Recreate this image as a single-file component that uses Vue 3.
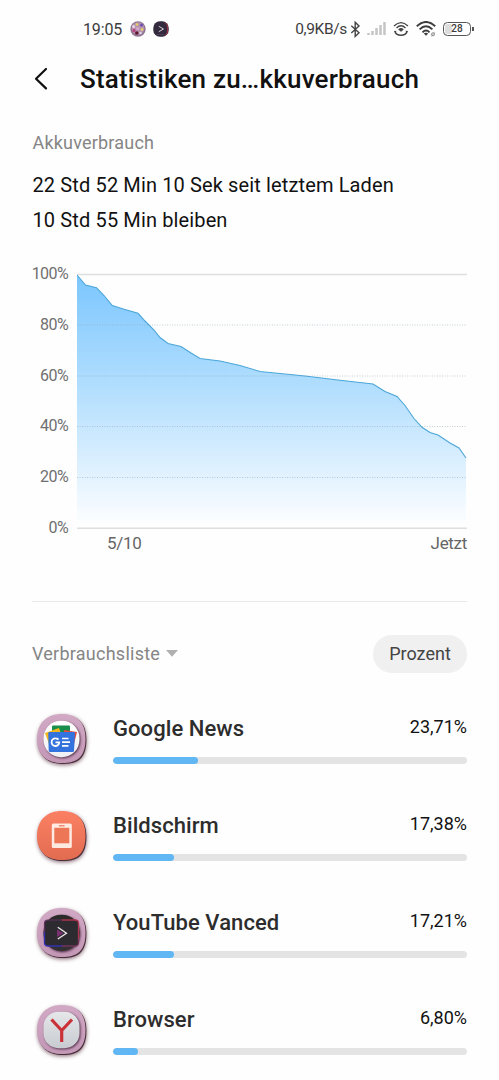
<template>
  <div class="screen">
    <div class="status-bar">
      <span class="clock">19:05</span>
      <svg class="note-icon" viewBox="0 0 16 16">
        <circle cx="8" cy="8" r="7.7" fill="#8f7590" />
        <circle cx="8" cy="7.5" r="6.3" fill="#b492b0" />
        <circle cx="7" cy="3.5" r="1.3" fill="#e8d05c" />
        <circle cx="11.5" cy="4.2" r="1.4" fill="#684bb0" />
        <circle cx="3.6" cy="5.5" r="1.5" fill="#ead6df" />
        <circle cx="12" cy="8.5" r="1.3" fill="#efd65d" />
        <circle cx="4" cy="9.4" r="1.5" fill="#b83c79" />
        <circle cx="6.8" cy="12" r="1.8" fill="#60172e" />
        <circle cx="10.5" cy="12" r="1.3" fill="#dad0e8" />
        <circle cx="7.7" cy="7.5" r="1.5" fill="#d8a8ce" />
      </svg>
      <svg class="note-icon second" viewBox="0 0 16 16">
        <rect x=".3" y=".3" width="15.4" height="15.4" rx="6.5" fill="#332b3d" />
        <path d="M12 1.5Q14.8 3 14.8 8T12 14.5" fill="none" stroke="#a52f49" stroke-width="1" />
        <path d="M5.8 5.3L10.5 8L5.8 10.7" fill="none" stroke="#d5cbd2" stroke-width="1" />
        <path d="M4 13.5h7" stroke="#59486a" stroke-width=".7" />
      </svg>
      <div class="system">
        <span class="speed">0,9KB/s</span>
        <svg class="bluetooth" width="11" height="17" viewBox="0 0 11 17">
          <path d="M1.3 4.7L9 11.7L5.2 15.4V1.2L9 5L1.3 12" fill="none" stroke="#444" stroke-width="1.4" />
        </svg>
        <svg class="signal" width="19" height="14" viewBox="0 0 19 14">
          <path d="M1.5 11v2M5.5 9v4M9.5 6v7M13.5 3v10M17.5 0v13" stroke="#c5c5c5" stroke-width="2.5" />
        </svg>
        <svg class="hotspot" width="16" height="16" viewBox="0 0 16 16">
          <g fill="none" stroke="#444" stroke-width="1.3">
            <path d="M1 5Q8-1.8 15 5M3.5 7Q8 2.5 12.5 7M5.7 9Q8 6.5 10.3 9" />
            <path d="M2 10.5Q3.2 14.3 8 14.3T14 10.5" stroke-width="1.5" />
          </g>
          <path d="M.8 10l2.7-.3-1 2.2zM15.2 10l-2.7-.3 1 2.2z" fill="#444" />
          <circle cx="8" cy="9.2" r="1.3" fill="#444" />
        </svg>
        <svg class="wifi" width="20" height="17" viewBox="0 0 20 17">
          <path d="M.8 5.2Q10-3.3 19.2 5.2M3.6 8.4Q10 2.3 16.4 8.4M6.5 11.3Q10 7.8 13.5 11.3" fill="none" stroke="#3d3d3d" stroke-width="1.9" />
          <path d="M7.8 12.5Q10 10.8 12.2 12.5L10 14.8z" fill="#3d3d3d" />
          <circle cx="17" cy="13.3" r="1.5" fill="none" stroke="#888" />
          <path d="M15.2 15.2l3.8-3.8" stroke="#888" stroke-width=".7" />
        </svg>
        <div class="battery">
          <span class="charge"></span>
          <span class="level">28</span>
        </div>
      </div>
    </div>

    <header class="title-bar">
      <svg width="14" height="24" viewBox="0 0 14 24">
        <path d="M12 2L2 11.7L12 21.4" fill="none" stroke="#111" stroke-width="2.2" stroke-linecap="round" stroke-linejoin="round" />
      </svg>
      <h1>Statistiken zu…kkuverbrauch</h1>
    </header>

    <section class="summary">
      <div class="caption">Akkuverbrauch</div>
      <p class="since">22 Std 52 Min 10 Sek seit letztem Laden</p>
      <p class="left">10 Std 55 Min bleiben</p>
    </section>

    <section class="chart">
      <div class="y-axis">
        <span v-for="tick in ticks" :key="tick">{{ tick }}%</span>
      </div>
      <div class="plot">
        <svg width="390" height="256" viewBox="0 0 390 256">
          <defs>
            <linearGradient id="fill" x1="0" y1="0" x2="0" y2="1">
              <stop offset="0" stop-color="#7bc6fe" />
              <stop offset=".5" stop-color="#b9e1fe" />
              <stop offset="1" stop-color="#fff" />
            </linearGradient>
          </defs>
          <path d="M0 1.5H390" stroke="#dedede" stroke-width="1.4" />
          <polygon :points="`0,255 ${curve} 389,255`" fill="url(#fill)" />
          <path d="M0 52H390M0 103H390M0 153.5H390M0 204.5H390" stroke="#879fac" stroke-opacity=".5" stroke-dasharray="1 1.5" />
          <polyline :points="curve" fill="none" stroke="#4ba6d8" stroke-width="1.1" />
          <path d="M0 255.3H390" stroke="#dedede" stroke-width="1.4" />
        </svg>
        <div class="x-axis"><span>5/10</span><span>Jetzt</span></div>
      </div>
    </section>

    <div class="filter">
      <span>Verbrauchsliste</span>
      <svg width="12" height="7" viewBox="0 0 12 7"><path d="M0 0h12L6 6.8z" fill="#b0b0b0" /></svg>
      <button>Prozent</button>
    </div>

    <ul class="usage">
      <li v-for="app in apps" :key="app.id">
        <svg class="app-icon" width="60" height="60" viewBox="0 0 60 60">
          <defs>
            <linearGradient :id="'rim-' + app.id" x1="0" y1="0" x2="0" y2="1">
              <stop offset="0" :stop-color="app.rim[0]" />
              <stop offset="1" :stop-color="app.rim[1]" />
            </linearGradient>
            <linearGradient :id="'face-' + app.id" x1="0" y1="0" x2="0" y2="1">
              <stop offset="0" :stop-color="app.face[0]" />
              <stop offset="1" :stop-color="app.face[1]" />
            </linearGradient>
          </defs>
          <path class="rim-shadow" :d="blob" fill="#492e39" />
          <path :d="blob" :fill="`url(#rim-${app.id})`" />
          <g v-if="app.id !== 'screen'">
            <rect class="face" x="11.5" y="10.7" width="36" height="36.5" :rx="app.id === 'browser' ? 15 : 17.5" :fill="`url(#face-${app.id})`" />
          </g>
          <g v-if="app.id === 'news'">
            <rect x="20" y="15.5" width="18" height="12" rx="1" fill="#188f4c" />
            <path d="M13 23L27 18L31 29L17 34z" fill="#f5b51e" />
            <path d="M32 20L45 22L42 34L31 31z" fill="#e64a3b" />
            <path d="M16.2 23Q16.7 21.8 18 22H41.5Q43 22 43 23.3L42 41Q42 42 40.5 42H18Q16.8 42 16.7 40.5z" fill="#3273dd" />
            <path d="M26.5 29.6Q25.4 28.4 23.5 28.4A3.8 3.8 0 1 0 27.2 32.4H23.5" fill="none" stroke="#fff" stroke-width="1.8" />
            <path d="M30 28.5h6.5M30 32.2h8M30 35.8h6.5" stroke="#fff" stroke-width="1.7" />
          </g>
          <g v-else-if="app.id === 'screen'">
            <rect x="19.8" y="16.5" width="20" height="24.5" rx="1.5" fill="#ffeae2" />
            <rect x="22.3" y="20.8" width="15" height="15.5" fill="#ed7657" />
            <path d="M27 18.8h5.5" stroke="#ed7657" stroke-width="1.2" />
          </g>
          <g v-else-if="app.id === 'vanced'" fill="none">
            <rect x="12.5" y="16" width="34" height="26" rx="4" fill="#2d2b30" />
            <path d="M12.5 29V19.5Q12.5 16 16 16H31" stroke="#60305e" stroke-width="1.2" />
            <path d="M30 16H43Q46.5 16 46.5 19.5V36" stroke="#ac334c" stroke-width="1.3" />
            <path d="M12.5 28V38.5Q12.5 42 16 42H31" stroke="#3531ad" stroke-width="1.4" />
            <path d="M30 42H43Q46.5 42 46.5 38.5V35" stroke="#71345c" stroke-width="1.3" />
            <path d="M25 25.6L31.5 29.3L25 33z" fill="#793171" />
            <path d="M25.8 23.3L34.5 29.2L25.8 35" stroke="#f1e7eb" stroke-width="1.3" />
          </g>
          <path v-else d="M19.5 18.5L29.7 29.5L40 18.5M29.7 29V41" fill="none" stroke="#cb3238" stroke-width="3.2" />
        </svg>
        <div class="details">
          <div class="row"><span class="name">{{ app.name }}</span><span class="percent">{{ app.percent }}</span></div>
          <div class="track"><div class="bar" :style="{ width: app.width + 'px' }"></div></div>
        </div>
      </li>
    </ul>
  </div>
</template>

<script setup>
const ticks = [100, 80, 60, 40, 20, 0]
const curve = '0,2 8.5,12 19.5,14.7 27,22.5 35.3,32.5 48,36.5 61,40.3 68,48 77,57 83,64.5 91,70.5 104,73.5 114,80 123,85.5 143,88 163,92.5 183,98.5 228,103 263,107.3 296,111 308,118.5 320,123.5 328,132.5 337,145.5 345,154.3 353,159.5 361,162 373,170 382,175 389,185'
const blob = 'M29.5 4C43 4 53.5 10 53.5 29S44 53 30 53S5 46 5 29S16 4 29.5 4z'
const pink = ['#d1a9c5', '#c397b6']

const apps = [
  { id: 'news', name: 'Google News', percent: '23,71%', width: 85, rim: pink, face: ['#ffffff', '#eff0f3'] },
  { id: 'screen', name: 'Bildschirm', percent: '17,38%', width: 60.5, rim: ['#fb8063', '#e26c50'], face: ['#ed7657', '#ed7657'] },
  { id: 'vanced', name: 'YouTube Vanced', percent: '17,21%', width: 60.5, rim: pink, face: ['#2c2929', '#343234'] },
  { id: 'browser', name: 'Browser', percent: '6,80%', width: 25, rim: pink, face: ['#e5e7e9', '#c8cbd0'] }
]
</script>

<style>
body {
  background: #fefefe;
}
</style>

<style scoped>
.screen {
  width: 499px;
  height: 1080px;
  overflow: hidden;
  box-sizing: border-box;
  padding: 0 32px;
  font-family: Roboto, "Liberation Sans", sans-serif;
  color: #111;
  background: #fefefe;
}
.status-bar {
  height: 58px;
  margin: 0 -7px 0 51px;
  display: flex;
  align-items: center;
  color: #3d3d3d;
}
.clock {
  width: 40px;
  font-size: 16px;
  letter-spacing: -0.15px;
  white-space: nowrap;
}
.note-icon {
  width: 16px;
  height: 16px;
  margin-left: 7px;
}
.system {
  margin-left: auto;
  display: flex;
  align-items: center;
}
.speed {
  font-size: 15.5px;
  letter-spacing: -0.35px;
}
.bluetooth {
  margin-left: 3px;
}
.signal {
  margin-left: 6px;
}
.hotspot {
  margin-left: 7px;
}
.wifi {
  margin-left: 7px;
}
.battery {
  width: 28px;
  height: 14px;
  box-sizing: border-box;
  margin: 0 3px 0 7px;
  border: 1.5px solid #555;
  border-radius: 4.5px;
  position: relative;
  text-align: center;
  line-height: 12px;
}
.battery::after {
  content: "";
  position: absolute;
  right: -4px;
  top: 4px;
  width: 2px;
  height: 4px;
  background: #555;
}
.charge {
  position: absolute;
  left: 1px;
  top: 1px;
  width: 7px;
  height: 10px;
  border-radius: 2px;
  background: #ddd;
}
.level {
  position: relative;
  font-size: 10px;
  font-weight: 500;
  display: block;
}
.title-bar {
  height: 42px;
  padding-left: 2px;
  display: flex;
  align-items: center;
}
h1 {
  margin: 0 0 0 32px;
  font-size: 26px;
  letter-spacing: 0.2px;
  font-weight: 500;
  white-space: nowrap;
}
.caption {
  height: 22px;
  margin-top: 32px;
  line-height: 22px;
  font-size: 18px;
  letter-spacing: 0.2px;
  color: #858585;
}
.summary {
  padding-left: 0.5px;
}
.summary p {
  margin: 0;
  font-size: 20px;
  letter-spacing: 0.13px;
  line-height: 35px;
  white-space: nowrap;
}
.summary .since {
  margin-top: 14px;
}
.chart {
  display: flex;
  margin-top: 35px;
  height: 328px;
}
.y-axis {
  width: 36px;
  height: 274px;
  margin-right: 9px;
  margin-top: -9px;
  display: flex;
  flex-direction: column;
  justify-content: space-between;
  align-items: flex-end;
  font-size: 16px;
  letter-spacing: -0.6px;
  line-height: 20px;
  color: #707070;
}
.plot svg {
  display: block;
}
.x-axis {
  width: 390px;
  padding-left: 30px;
  box-sizing: border-box;
  display: flex;
  justify-content: space-between;
  line-height: 28px;
  font-size: 17px;
  letter-spacing: -0.3px;
  color: #656565;
}
.filter {
  height: 105px;
  box-sizing: border-box;
  border-top: 1.5px solid #e8e8e8;
  display: flex;
  align-items: center;
  padding-bottom: 1px;
  font-size: 18px;
  letter-spacing: 0.25px;
  color: #858585;
}
.filter svg {
  margin-left: 6px;
}
button {
  width: 94px;
  height: 38px;
  padding: 0;
  margin-left: auto;
  border: 0;
  border-radius: 19px;
  background: #f0f0f0;
  color: #444;
  font: 18px Roboto, sans-serif;
}
.usage {
  list-style: none;
  margin: 0;
  padding: 0;
}
.usage li {
  height: 97px;
  display: flex;
}
.app-icon {
  flex: none;
  margin-top: 4px;
  overflow: visible;
}
.rim-shadow {
  filter: drop-shadow(0.5px 1px 2px #80606d);
  transform: translate(0.9px, 0.9px);
}
.face {
  filter: drop-shadow(1px 1.5px 1px #55334b);
}
.details {
  flex: 1;
  margin-left: 21px;
}
.row {
  height: 51px;
  display: flex;
  justify-content: space-between;
}
.name {
  padding-top: 8px;
  line-height: 30px;
  font-size: 22px;
  letter-spacing: 0.07px;
  font-weight: 500;
  color: #2d2d2d;
}
.percent {
  padding-top: 6px;
  line-height: 30px;
  font-size: 18px;
}
.track {
  height: 7px;
  overflow: hidden;
  border-radius: 4px;
  background: #e4e4e4;
}
.bar {
  height: 7px;
  border-radius: 4px;
  background: #61b7f4;
}
</style>
